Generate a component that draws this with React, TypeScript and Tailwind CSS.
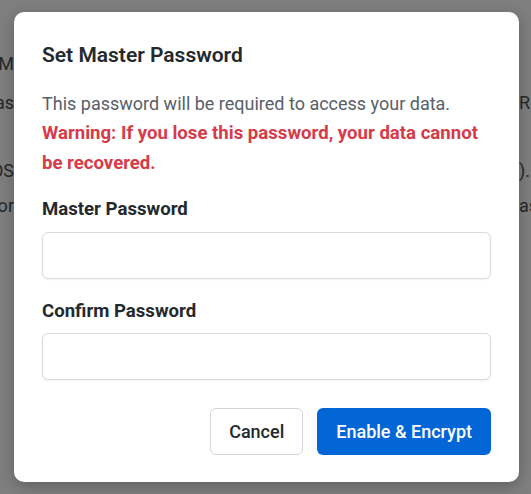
import { useState } from 'react';

// Page content sitting behind the overlay; only slivers show at the edges.
const backgroundRows = [
  { left: 'Encryption M', right: '', className: 'mt-[52px]' },
  { left: 'Protect your data with a master pas', right: 'RESET', className: 'mt-[15px]' },
  { left: 'Supported on all OS', right: '). More', className: 'mt-[44px]' },
  { left: 'Keys are stored locally on your device or', right: 'as needed', className: 'mt-[11px]' },
];

const EdgeText = ({ text, align }: { text: string; align: 'left' | 'right' }) => (
  <span
    className={
      align === 'left'
        ? 'flex w-[14px] justify-end overflow-hidden whitespace-nowrap'
        : 'flex w-[12px] justify-start overflow-hidden whitespace-nowrap'
    }
  >
    {text}
  </span>
);

interface FieldProps {
  label: string;
  value: string;
  onChange: (next: string) => void;
  className: string;
  labelGap: string;
}

const Field = ({ label, value, onChange, className, labelGap }: FieldProps) => (
  <div className={className}>
    <label className={`block text-[18.6px] font-bold leading-6 text-[#24292e] ${labelGap}`}>{label}</label>
    <input
      type="password"
      value={value}
      onChange={(event) => onChange(event.target.value)}
      className="block h-[47px] w-full rounded-md border border-[#d8dbdf] bg-white px-3 text-[18px] text-[#24292e] shadow-[0_1px_2px_rgba(0,0,0,0.06)] outline-none"
    />
  </div>
);

export default function App() {
  const [password, setPassword] = useState('');
  const [confirm, setConfirm] = useState('');

  return (
    <div className="relative h-[494px] w-[531px] overflow-hidden bg-white font-['Roboto','Liberation_Sans',sans-serif]">
      <div className="flex flex-col text-[18px] leading-6 text-[#4b5158]">
        {backgroundRows.map((row) => (
          <div key={row.left} className={`flex justify-between ${row.className}`}>
            <EdgeText text={row.left} align="left" />
            <EdgeText text={row.right} align="right" />
          </div>
        ))}
      </div>

      <div className="absolute inset-0 flex items-center justify-center bg-black/50 pl-[2px]">
        <div className="w-[505px] rounded-[10px] bg-white px-[28px] pb-[27px] pt-[31px] shadow-[0_4px_16px_rgba(0,0,0,0.25)]">
          <h2 className="text-[21px] font-semibold leading-6 text-[#24292e]">Set Master Password</h2>

          <p className="mt-[22px] text-[18px] leading-[29px] text-[#586069]">
            This password will be required to access your data.
            <br />
            <strong className="text-[18.6px] font-bold text-[#d73a49]">
              Warning: If you lose this password, your data cannot be recovered.
            </strong>
          </p>

          <Field
            label="Master Password"
            value={password}
            onChange={setPassword}
            className="mt-[19px]"
            labelGap="mb-[11px]"
          />
          <Field
            label="Confirm Password"
            value={confirm}
            onChange={setConfirm}
            className="mt-[20px]"
            labelGap="mb-[10px]"
          />

          <div className="mt-[28px] flex justify-end gap-[14px]">
            <button className="h-[47px] rounded-md border border-[#d1d5da] bg-white px-[18px] text-[18px] font-medium text-[#24292e]">
              Cancel
            </button>
            <button className="h-[47px] rounded-md bg-[#0366d6] px-[19px] text-[18px] font-medium text-white">
              Enable &amp; Encrypt
            </button>
          </div>
        </div>
      </div>
    </div>
  );
}
